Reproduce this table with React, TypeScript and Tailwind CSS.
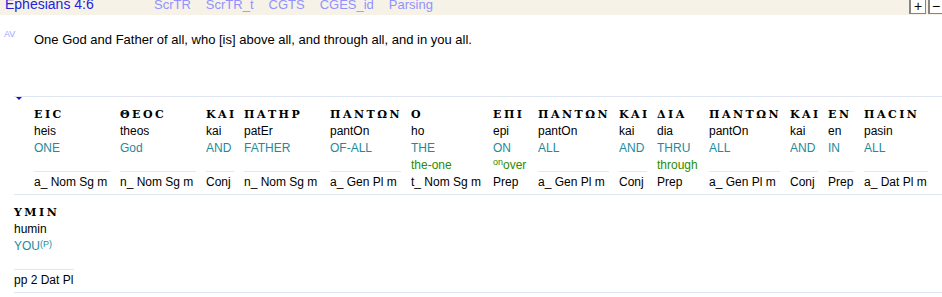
import React from 'react';

type Word = {
  greek: string;
  translit: string;
  gloss: React.ReactNode;
  gloss2?: React.ReactNode;
  parse: string;
  width: string;
};

const row1: Word[] = [
  { greek: 'ΕΙϹ', translit: 'heis', gloss: 'ONE', parse: 'a_ Nom Sg m', width: 'w-[76px]' },
  { greek: 'ΘΕΟϹ', translit: 'theos', gloss: 'God', parse: 'n_ Nom Sg m', width: 'w-[76px]' },
  { greek: 'ΚΑΙ', translit: 'kai', gloss: 'AND', parse: 'Conj', width: 'w-[28px]' },
  { greek: 'ΠΑΤΗΡ', translit: 'patEr', gloss: 'FATHER', parse: 'n_ Nom Sg m', width: 'w-[76px]' },
  { greek: 'ΠΑΝΤΩΝ', translit: 'pantOn', gloss: 'OF-ALL', parse: 'a_ Gen Pl m', width: 'w-[71px]' },
  { greek: 'Ο', translit: 'ho', gloss: 'THE', gloss2: 'the-one', parse: 't_ Nom Sg m', width: 'w-[72px]' },
  {
    greek: 'ΕΠΙ',
    translit: 'epi',
    gloss: 'ON',
    gloss2: (
      <>
        <span className="relative -top-[4px] text-[9px]">on</span>over
      </>
    ),
    parse: 'Prep',
    width: 'w-[35px]',
  },
  { greek: 'ΠΑΝΤΩΝ', translit: 'pantOn', gloss: 'ALL', parse: 'a_ Gen Pl m', width: 'w-[71px]' },
  { greek: 'ΚΑΙ', translit: 'kai', gloss: 'AND', parse: 'Conj', width: 'w-[28px]' },
  { greek: 'ΔΙΑ', translit: 'dia', gloss: 'THRU', gloss2: 'through', parse: 'Prep', width: 'w-[42px]' },
  { greek: 'ΠΑΝΤΩΝ', translit: 'pantOn', gloss: 'ALL', parse: 'a_ Gen Pl m', width: 'w-[71px]' },
  { greek: 'ΚΑΙ', translit: 'kai', gloss: 'AND', parse: 'Conj', width: 'w-[28px]' },
  { greek: 'ΕΝ', translit: 'en', gloss: 'IN', parse: 'Prep', width: 'w-[26px]' },
  { greek: 'ΠΑϹΙΝ', translit: 'pasin', gloss: 'ALL', parse: 'a_ Dat Pl m', width: 'w-[64px]' },
];

const row2: Word[] = [
  {
    greek: 'ΥΜΙΝ',
    translit: 'humin',
    gloss: (
      <>
        YOU<span className="relative -top-[3px] text-[9px]">(P)</span>
      </>
    ),
    parse: 'pp 2 Dat Pl',
    width: 'w-[60px]',
  },
];

const tabs = ['ScrTR', 'ScrTR_t', 'CGTS', 'CGES_id', 'Parsing'];

const WordColumn: React.FC<{ word: Word }> = ({ word }) => (
  <div className={`${word.width} flex shrink-0 flex-col whitespace-nowrap pt-[9px]`}>
    <div className="h-[17px] font-['DejaVu_Serif',serif] text-[11px] font-bold leading-[17px] tracking-[2.5px] text-black">
      {word.greek}
    </div>
    <div className="h-[17px] leading-[17px] text-black">{word.translit}</div>
    <div className="h-[17px] leading-[17px] text-[#1e8a9c]">{word.gloss}</div>
    {word.gloss2 ? (
      <div className="h-[15px] leading-[17px] text-[#2f8a00]">{word.gloss2}</div>
    ) : (
      <div className="h-[15px] border-b border-[#e2eae2]" />
    )}
    <div className="h-[20px] leading-[20px] text-black">{word.parse}</div>
  </div>
);

const App: React.FC = () => {
  return (
    <div className="h-[297px] w-[942px] overflow-hidden bg-white font-['Liberation_Sans',Arial,sans-serif] text-[12px]">
      {/* Top bar */}
      <div className="flex h-[15px] items-start overflow-hidden bg-[#f6f2e7]">
        <div className="-mt-[4px] w-[154px] shrink-0 pl-[5px] text-[14px] leading-[16px] text-[#2323dc]">
          Ephesians 4:6
        </div>
        <div className="-mt-[3px] flex gap-[15px] text-[13px] leading-[16px] text-[#9292ff]">
          {tabs.map((tab) => (
            <span key={tab}>{tab}</span>
          ))}
        </div>
        <div className="ml-auto -mt-[3px] flex gap-[2px]">
          <div className="flex h-[17px] w-[17px] items-center justify-center border border-l-2 border-[#858585] bg-white text-[14px] leading-none text-black">
            +
          </div>
          <div className="flex h-[17px] w-[14px] items-center justify-center border border-l-2 border-r-0 border-[#858585] bg-white text-[14px] leading-none text-black">
            −
          </div>
        </div>
      </div>

      {/* Verse */}
      <div className="mt-[16px] flex pl-[4px]">
        <span className="-mt-[2px] w-[30px] shrink-0 text-[9px] leading-[11px] text-[#a3a3ff]">AV</span>
        <span className="text-[13px] leading-[17px] text-black">
          One God and Father of all, who [is] above all, and through all, and in you all.
        </span>
      </div>

      {/* Interlinear */}
      <div className="ml-[14px] mt-[48px]">
        <div className="flex gap-[10px] border-y border-[#dfe5f1] pb-[2px]">
          <div className="w-[10px] shrink-0">
            <div className="ml-[2px] h-0 w-0 border-x-[3px] border-t-[3px] border-x-transparent border-t-[#1414c8]" />
          </div>
          {row1.map((w, i) => (
            <WordColumn key={i} word={w} />
          ))}
        </div>
        <div className="flex gap-[10px] border-b border-[#dfe5f1] pb-[2px]">
          {row2.map((w, i) => (
            <WordColumn key={i} word={w} />
          ))}
        </div>
      </div>
    </div>
  );
};

export default App;
